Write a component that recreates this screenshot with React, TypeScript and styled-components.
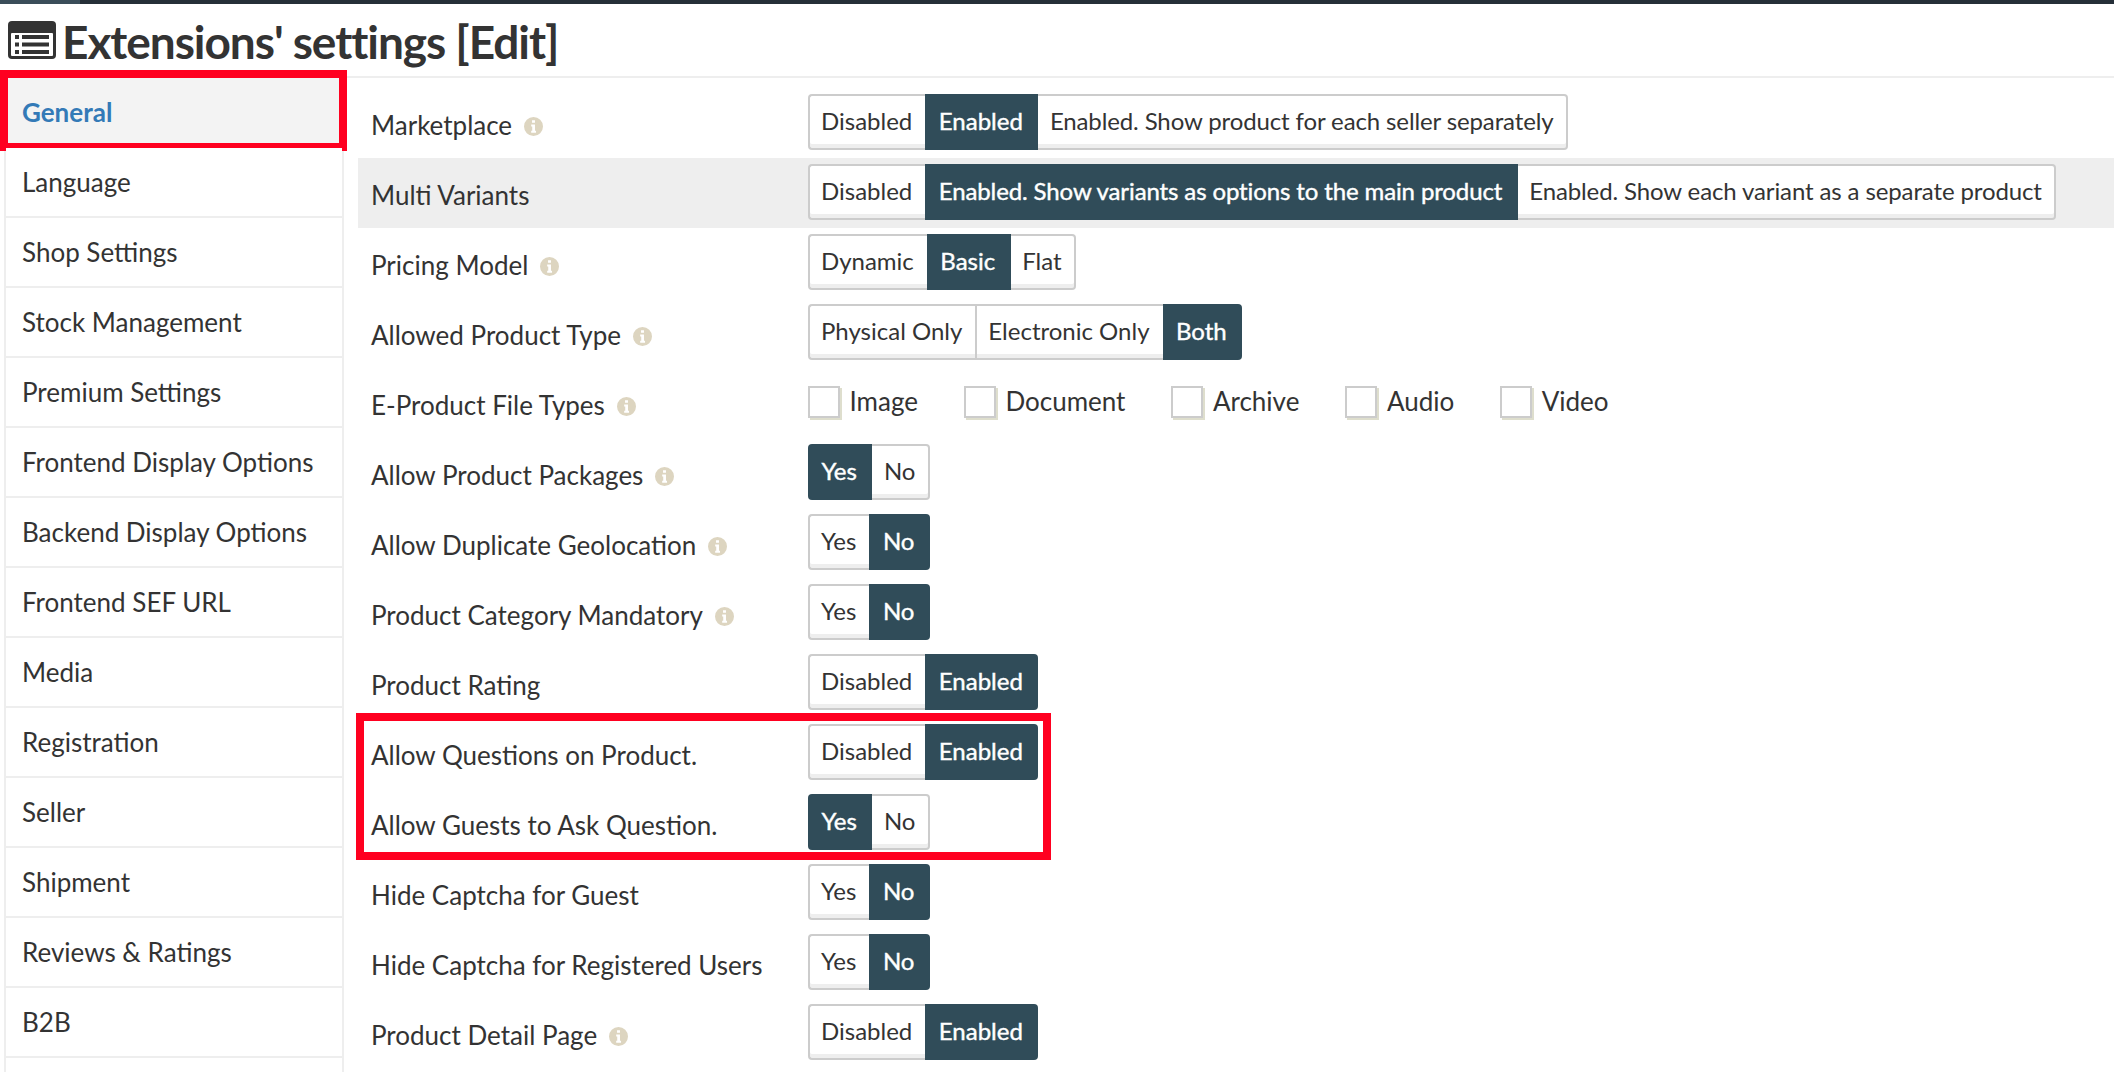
import React from 'react'
import styled, { createGlobalStyle } from 'styled-components'

const GlobalStyle = createGlobalStyle`
  html, body {
    margin: 0;
    height: 1072px;
    overflow: hidden;
    background: #fff;
    color: #333;
    font-family: Lato, "Open Sans", sans-serif;
  }
`

const TopBar = styled.div`
  height: 4px;
  background: #252f38;
`

const TopBarTab = styled.div`
  width: 80px;
  height: 100%;
  background: #3a4d59;
`

const Header = styled.header`
  display: flex;
  align-items: center;
  gap: 6px;
  height: 72px;
  padding-left: 8px;
  border-bottom: 2px solid #eee;
`

const Title = styled.h1`
  margin: 0;
  padding-top: 3px;
  font-size: 46px;
  line-height: 69px;
  font-weight: 700;
  letter-spacing: -1.05px;
  color: #333;
`

const Body = styled.div`
  display: flex;
  align-items: flex-start;
`

const Sidebar = styled.nav`
  flex: 0 0 340px;
  height: 994px;
  margin-left: 4px;
  border-left: 2px solid #eee;
  border-right: 2px solid #eee;
  box-sizing: border-box;
`

const SideItem = styled.div<{ $active?: boolean }>`
  position: relative;
  height: 70px;
  box-sizing: border-box;
  padding-left: 16px;
  line-height: 68px;
  font-size: 26px;
  border-bottom: 2px solid #eee;
  color: ${p => (p.$active ? '#337ab7' : '#333')};
  font-weight: ${p => (p.$active ? 700 : 400)};
  background: ${p => (p.$active ? '#f3f3f3' : '#fff')};
`

// red marks drawn on top of the screenshot
const Annotation = styled.div<{ $top: number; $right: number; $bottom: number; $left: number }>`
  position: absolute;
  top: ${p => p.$top}px;
  right: ${p => p.$right}px;
  bottom: ${p => p.$bottom}px;
  left: ${p => p.$left}px;
  border: 8px solid #ff0020;
  pointer-events: none;
`

const Main = styled.main`
  flex: 1;
  margin-left: 14px;
  padding-top: 10px;
`

const Row = styled.div<{ $highlight?: boolean }>`
  display: flex;
  height: 70px;
  box-sizing: border-box;
  padding: 6px 0 0 13px;
  background: ${p => (p.$highlight ? '#eee' : 'transparent')};
`

const Marked = styled.div`
  position: relative;
`

const Label = styled.div`
  flex: 0 0 437px;
  display: flex;
  align-items: center;
  gap: 12px;
  height: 62px;
  font-size: 26px;
`

const HintIcon = styled.svg`
  width: 19px;
  height: 19px;
  margin-top: 2px;
  fill: #ddd5c0;
`

const Toggle = styled.div`
  display: inline-flex;
  height: 56px;
`

const Segment = styled.div<{ $active: boolean; $divider: boolean; $afterActive: boolean; $long: boolean }>`
  display: flex;
  align-items: center;
  box-sizing: border-box;
  height: 56px;
  padding: 0 13px 3px;
  font-size: 24px;
  white-space: nowrap;
  letter-spacing: ${p => (p.$long ? '-0.12px' : '0')};
  color: ${p => (p.$active ? '#fff' : '#333')};
  background: ${p => (p.$active ? '#304c59' : '#fff')};
  border-top: 2px solid ${p => (p.$active ? '#304c59' : '#ccc')};
  border-bottom: 2px solid ${p => (p.$active ? '#304c59' : '#ccc')};
  box-shadow: ${p => (p.$active ? 'none' : 'inset 0 -4px 0 #eee')};
  -webkit-text-stroke: ${p => (p.$active ? '0.4px #fff' : '0')};
  ${p => p.$active && 'padding-left: 13.5px; padding-right: 15.5px;'}
  ${p => p.$afterActive && 'padding-left: 11.5px; padding-right: 14.5px;'}
  ${p => p.$divider && 'border-left: 2px solid #ccc; padding-left: 11px;'}

  &:first-child {
    border-radius: 4px 0 0 4px;
    border-left: 2px solid ${p => (p.$active ? '#304c59' : '#ccc')};
    padding-left: ${p => (p.$active ? '11.5px' : '11px')};
    padding-right: ${p => (p.$active ? '15.5px' : '13px')};
  }

  &:last-child {
    border-radius: 0 4px 4px 0;
    border-right: 2px solid ${p => (p.$active ? '#304c59' : '#ccc')};
    padding-right: ${p => (p.$active ? '13.5px' : p.$afterActive ? '12.5px' : '11px')};
  }
`

const CheckGroup = styled.div`
  display: flex;
  align-items: center;
  height: 56px;
  gap: 46px;
`

const CheckLabel = styled.label`
  display: flex;
  align-items: center;
  gap: 9.5px;
  font-size: 26px;
  padding-bottom: 1px;
`

const CheckText = styled.span`
  margin-top: -2px;
`

const Check = styled.input`
  appearance: none;
  width: 32px;
  height: 32px;
  margin: 0;
  background: #fff;
  border: 2px solid #ccc;
  box-shadow: 2px 2px 0 #dedecd;
`

const ListIcon = () => (
  <svg width="48" height="38" viewBox="0 0 48 38" aria-hidden="true">
    <rect width="48" height="38" rx="4" fill="#333" />
    <rect x="3" y="12" width="42" height="23" rx="1" fill="#fff" />
    <g fill="#333">
      <rect x="7" y="14" width="4" height="4" />
      <rect x="7" y="21.5" width="4" height="4" />
      <rect x="7" y="29" width="4" height="4" />
      <rect x="14" y="14" width="27" height="4" />
      <rect x="14" y="21.5" width="27" height="4" />
      <rect x="14" y="29" width="27" height="4" />
    </g>
  </svg>
)

const Hint = () => (
  <HintIcon viewBox="0 0 18 18" aria-hidden="true">
    <path
      fillRule="evenodd"
      d="M9 0a9 9 0 1 0 0 18A9 9 0 0 0 9 0zM7.6 3h2.8v2.4H7.6V3zM6.8 7h3.6v6h1v2H6.8v-2h1V9h-1V7z"
    />
  </HintIcon>
)

const sideItems = [
  'General',
  'Language',
  'Shop Settings',
  'Stock Management',
  'Premium Settings',
  'Frontend Display Options',
  'Backend Display Options',
  'Frontend SEF URL',
  'Media',
  'Registration',
  'Seller',
  'Shipment',
  'Reviews & Ratings',
  'B2B',
]

const fileTypes = ['Image', 'Document', 'Archive', 'Audio', 'Video']
const enabled = ['Disabled', 'Enabled']
const yesNo = ['Yes', 'No']

interface Setting {
  label: string
  hint?: boolean
  options: string[]
  active: number
  highlight?: boolean
}

const Options = ({ options, active }: { options: string[]; active: number }) => (
  <Toggle>
    {options.map((o, i) => (
      <Segment
        key={o}
        $active={i === active}
        $afterActive={i - 1 === active}
        $divider={i > 0 && i !== active && i - 1 !== active}
        $long={o.length > 20}
      >
        {o}
      </Segment>
    ))}
  </Toggle>
)

const SettingRow = ({ label, hint, options, active, highlight }: Setting) => (
  <Row $highlight={highlight}>
    <Label>
      {label}
      {hint && <Hint />}
    </Label>
    <Options options={options} active={active} />
  </Row>
)

const App = () => (
  <>
    <GlobalStyle />
    <TopBar>
      <TopBarTab />
    </TopBar>
    <Header>
      <ListIcon />
      <Title>Extensions' settings [Edit]</Title>
    </Header>
    <Body>
      <Sidebar>
        {sideItems.map((item, i) => (
          <SideItem key={item} $active={i === 0}>
            {item}
            {i === 0 && <Annotation $top={-8} $right={-5} $bottom={-5} $left={-6} />}
          </SideItem>
        ))}
      </Sidebar>
      <Main>
        <SettingRow label="Marketplace" hint options={['Disabled', 'Enabled', 'Enabled. Show product for each seller separately']} active={1} />
        <SettingRow
          label="Multi Variants"
          highlight
          options={['Disabled', 'Enabled. Show variants as options to the main product', 'Enabled. Show each variant as a separate product']}
          active={1}
        />
        <SettingRow label="Pricing Model" hint options={['Dynamic', 'Basic', 'Flat']} active={1} />
        <SettingRow label="Allowed Product Type" hint options={['Physical Only', 'Electronic Only', 'Both']} active={2} />
        <Row>
          <Label>
            E-Product File Types
            <Hint />
          </Label>
          <CheckGroup>
            {fileTypes.map(t => (
              <CheckLabel key={t}>
                <Check type="checkbox" />
                <CheckText>{t}</CheckText>
              </CheckLabel>
            ))}
          </CheckGroup>
        </Row>
        <SettingRow label="Allow Product Packages" hint options={yesNo} active={0} />
        <SettingRow label="Allow Duplicate Geolocation" hint options={yesNo} active={1} />
        <SettingRow label="Product Category Mandatory" hint options={yesNo} active={1} />
        <SettingRow label="Product Rating" options={enabled} active={1} />
        <Marked>
          <SettingRow label="Allow Questions on Product." options={enabled} active={1} />
          <SettingRow label="Allow Guests to Ask Question." options={yesNo} active={0} />
          <Annotation $top={-5} $right={1063} $bottom={-2} $left={-2} />
        </Marked>
        <SettingRow label="Hide Captcha for Guest" options={yesNo} active={1} />
        <SettingRow label="Hide Captcha for Registered Users" options={yesNo} active={1} />
        <SettingRow label="Product Detail Page" hint options={enabled} active={1} />
      </Main>
    </Body>
  </>
)

export default App
